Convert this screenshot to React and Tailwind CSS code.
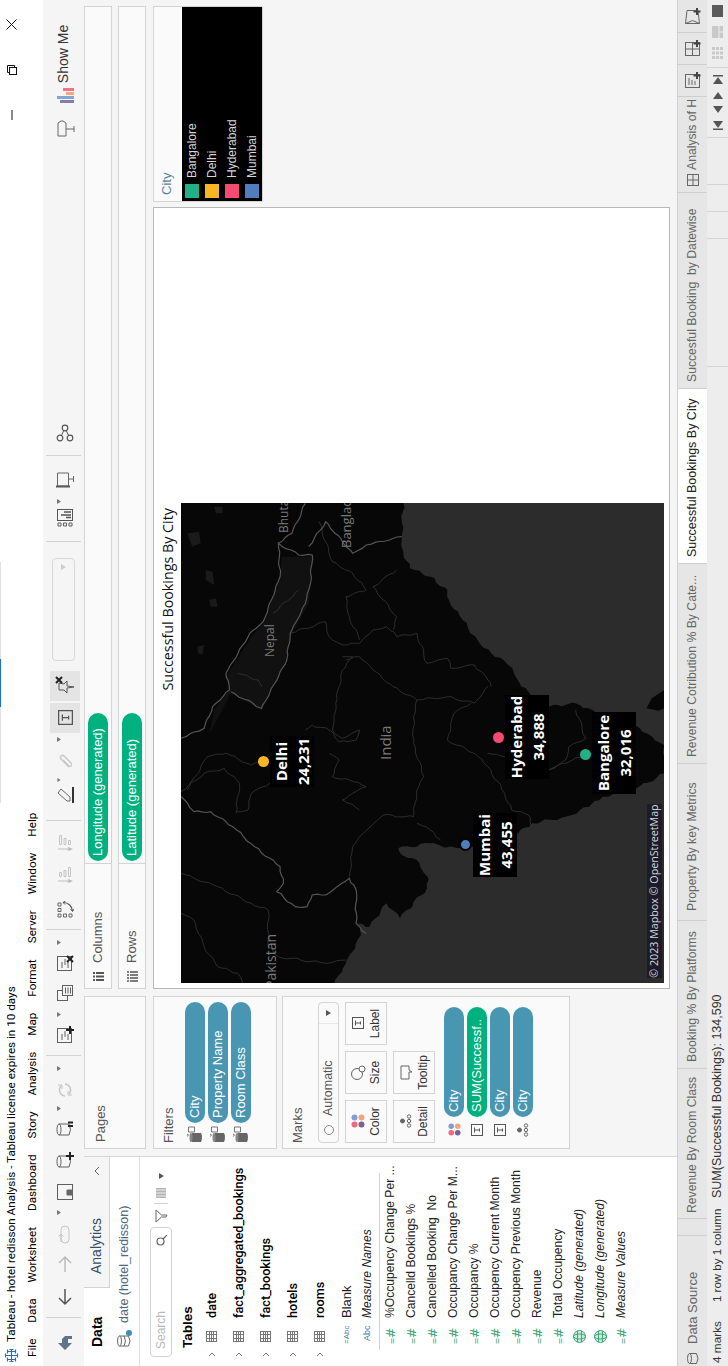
import React from 'react'

// the whole window is turned on its side in the reference, so it is laid out
// upright at 1366x728 and rotated once at the root
const gray = '#5f5f5f'

const Svg = ({ w = 20, h = 20, children, className = '' }) => (
  <svg width={w} height={h} viewBox={`0 0 ${w} ${h}`} fill="none" stroke={gray} strokeWidth="1" className={className}>
    {children}
  </svg>
)

const Drop = ({ className = 'w-[10px]' }) => (
  <div className={`flex justify-center items-center shrink-0 ${className}`}>
    <svg width="5" height="4" viewBox="0 0 5 4" className="mt-[-12px]"><path d="M0 0h5L2.5 4z" fill="#777" /></svg>
  </div>
)

const Sep = ({ className = '' }) => <div className={`w-px h-[35px] mt-[-3px] bg-[#d2d2d2] shrink-0 ${className}`} />

const Slot = ({ className, children }) => (
  <div className={`flex justify-center items-center shrink-0 h-[30px] ${className}`}>{children}</div>
)

const Plus = ({ x, y, c = '#222' }) => <path d={`M${x - 4} ${y}h8M${x} ${y - 4}v8`} stroke={c} strokeWidth="2" />
const Cross = ({ x, y }) => <path d={`M${x - 3} ${y - 3}l6 6M${x + 3} ${y - 3}l-6 6`} stroke="#222" strokeWidth="2" />

const Cyl = ({ x = 3, y = 2, w = 11, h = 14, c = gray }) => (
  <g stroke={c}>
    <ellipse cx={x + w / 2} cy={y + 2} rx={w / 2} ry="2" />
    <path d={`M${x} ${y + 2}v${h - 3}q${w / 2} 3 ${w} 0v-${h - 3}`} />
  </g>
)

const TBox = ({ s = 12 }) => (
  <svg width={s} height={s} viewBox="0 0 12 12" fill="none" stroke="#555">
    <rect x="0.5" y="0.5" width="11" height="11" />
    <path d="M3.5 3.5h5M6 3.5v5M4.5 8.5h3" />
  </svg>
)

const Dots = ({ s = 14 }) => (
  <svg width={s} height={s} viewBox="0 0 14 14">
    <circle cx="3.5" cy="3.5" r="3" fill="#f4677f" />
    <circle cx="10.5" cy="3.5" r="3" fill="#7f9fd0" />
    <circle cx="3.5" cy="10.5" r="3" fill="#7d5f94" />
    <circle cx="10.5" cy="10.5" r="3" fill="#f4a27a" />
  </svg>
)

const DetailDots = () => (
  <svg width="14" height="14" viewBox="0 0 14 14" fill="none" stroke="#666">
    <circle cx="7" cy="3.5" r="2" fill="#666" />
    <circle cx="2.5" cy="10" r="1.7" />
    <circle cx="7" cy="10" r="1.7" />
    <circle cx="11.5" cy="10" r="1.7" />
  </svg>
)

const SortGlyph = ({ bars }) => (
  <Svg w={16} h={16}>
    <path d="M2 1v13M.5 11L2 14.500 3.500 11" stroke="#bdbdbd" strokeWidth="1.200" />
    <path d={bars} stroke="#c4c4c4" />
  </Svg>
)

function Toolbar() {
  return (
    <div className="h-[41px] flex items-center pt-[3px] shrink-0">
      <Slot className="w-[48px]">
        <svg width="16" height="16" viewBox="0 0 16 16"><path d="M0 8l7-7v4h4l3 3v7h-3v-4H7v4z" fill="#5f7389" /></svg>
      </Slot>
      <Sep />
      <Slot className="w-[40px]">
        <Svg w={18} h={14}><path d="M17 7H2M8 1L2 7l6 6" stroke="#555" strokeWidth="1.500" /></Svg>
      </Slot>
      <Slot className="w-[26px]">
        <Svg w={18} h={14}><path d="M1 7h15M10 1l6 6-6 6" stroke="#bbb" strokeWidth="1.500" /></Svg>
      </Slot>
      <Slot className="w-[32px]">
        <Svg w={20} h={14}><rect x="2" y="3" width="17" height="8" rx="4" stroke="#c4c4c4" /><path d="M3 3h8M8.500 .5L11 3 8.500 5.500" stroke="#c4c4c4" /></Svg>
      </Slot>
      <Drop className="w-[12px]" />
      <Slot className="w-[30px]">
        <Svg w={16} h={16}><rect x="0.500" y="0.500" width="15" height="15" /><path d="M5 10h5v5.500H5z" fill="#666" stroke="#666" /></Svg>
      </Slot>
      <Slot className="w-[34px]">
        <Svg w={18} h={18}><Cyl x={2} y={1} w={11} h={13} /><Plus x={13} y={14} /></Svg>
      </Slot>
      <Slot className="w-[30px]">
        <Svg w={18} h={18}><Cyl x={2} y={1} w={11} h={13} /><path d="M11 12v5M14.500 12v5" stroke="#222" strokeWidth="2" /></Svg>
      </Slot>
      <Drop className="w-[8px]" />
      <Slot className="w-[30px]">
        <Svg w={16} h={16}><path d="M2 8a6 6 0 0 1 10-4M14 8a6 6 0 0 1-10 4" stroke="#c4c4c4" strokeWidth="1.400" /><path d="M13 1v4H9M3 15v-4h4" stroke="#c4c4c4" /></Svg>
      </Slot>
      <Drop className="w-[12px]" />
      <Sep className="ml-[7px]" />
      <Slot className="w-[30px] ml-[5px]">
        <Svg w={18} h={18}><rect x="1.500" y="1.500" width="14" height="14" /><path d="M4 6h6M7 9h6M4 12h6" /><Plus x={14} y={14} /></Svg>
      </Slot>
      <Drop className="w-[10px]" />
      <Slot className="w-[34px]">
        <Svg w={18} h={18}><rect x="1.500" y="1.500" width="10" height="10" /><rect x="6.500" y="6.500" width="10" height="10" fill="#f5f5f5" /><path d="M8.500 9.500h6M8.500 12h6M8.500 14.500h6" /></Svg>
      </Slot>
      <Slot className="w-[26px]">
        <Svg w={18} h={18}><rect x="1.500" y="1.500" width="14" height="14" /><path d="M4 6h6M7 9h6M4 12h6" /><Cross x={13} y={14} /></Svg>
      </Slot>
      <Drop className="w-[14px]" />
      <Sep className="ml-[6px]" />
      <Slot className="w-[38px]">
        <Svg w={17} h={17}>
          <path d="M1 1h3v3H1zM1 6.500h3v3H1zM1 12h3v3H1zM6.500 1h3v3h-3zM12 1h3v3h-3z" stroke="#666" />
          <path d="M15.500 6.500A9 9 0 0 1 7 15.500" stroke="#555" strokeWidth="1.200" />
          <path d="M13.500 8l2-2 1.500 2.500M9 13.500L6.500 15.500 9 17" stroke="#555" />
        </Svg>
      </Slot>
      <Slot className="w-[32px]">
        <SortGlyph bars="M6.500 2.500h4v2h-4zM6.500 7h6v2h-6zM6.500 11.500h9v2h-9z" />
      </Slot>
      <Slot className="w-[32px]">
        <SortGlyph bars="M6.500 2.500h9v2h-9zM6.500 7h6v2h-6zM6.500 11.500h4v2h-4z" />
      </Slot>
      <Sep className="ml-[6px]" />
      <Slot className="w-[26px] ml-[12px]">
        <Svg w={16} h={18}><path d="M2 11L10 2l4 3-8 9H2z" stroke="#666" /><path d="M0 17h16" stroke="#333" strokeWidth="2" /></Svg>
      </Slot>
      <Drop className="w-[4px]" />
      <Slot className="w-[34px]">
        <Svg w={16} h={14}><path d="M2 11L10 3a2 2 0 0 1 3 3L6 13a1.500 1.500 0 0 1-3-2l6-6" stroke="#c8c8c8" strokeWidth="1.500" /></Svg>
      </Slot>
      <Drop className="w-[8px]" />
      <Slot className="w-[30px] ml-[3px] bg-[#e4e4e4]"><TBox s={15} /></Slot>
      <Slot className="w-[30px] ml-[2px] bg-[#e4e4e4]">
        <Svg w={20} h={20}><path d="M6 4h7l-1 5 3 3H10l-1 7-1-7H3l3-3z" stroke="#555" /><Cross x={16} y={4} /></Svg>
      </Slot>
      <div className="w-[103px] h-[23px] ml-[10px] mt-[-3px] border border-[#d8d8d8] rounded-sm flex items-center justify-end pr-[5px] shrink-0">
        <svg width="6" height="5" viewBox="0 0 6 5"><path d="M0 0h6L3 5z" fill="#ccc" /></svg>
      </div>
      <Sep className="ml-[16px]" />
      <Slot className="w-[20px] ml-[13px]">
        <Svg w={18} h={16}><path d="M1 1h3v3H1zM1 6.500h3v3H1zM1 12h3v3H1z" /><rect x="6.500" y=".5" width="11" height="15" stroke="#555" /><path d="M9.500 9v5M12 4v10M15 7v7" stroke="#555" strokeWidth="1.500" /></Svg>
      </Slot>
      <Drop className="w-[12px]" />
      <Slot className="w-[30px] ml-px">
        <Svg w={18} h={18}><path d="M2.500 0v14" stroke="#555" strokeWidth="2" /><path d="M3 1.500h13v11H3z" stroke="#666" /><path d="M10 13v4M7 17.500h6" stroke="#666" /></Svg>
      </Slot>
      <Sep className="ml-[9px]" />
      <Slot className="w-[44px]">
        <Svg w={18} h={18}><circle cx="4" cy="4" r="2.800" stroke="#555" strokeWidth="1.200" /><circle cx="4" cy="14" r="2.800" stroke="#555" strokeWidth="1.200" /><circle cx="14" cy="9" r="2.800" stroke="#555" strokeWidth="1.200" /><path d="M6.500 5.500L12 8M6.500 12.500L12 10" stroke="#555" /></Svg>
      </Slot>
      <div className="flex-1" />
      <Slot className="w-[26px]">
        <Svg w={20} h={20}><path d="M3 3h13l2 3v2l-2 3H3z" stroke="#666" /><path d="M10 11v8M7 19h6" stroke="#666" /></Svg>
      </Slot>
      <Slot className="w-[18px] ml-[12px]">
        <svg width="16" height="18" viewBox="0 0 16 18">
          <rect x="0" y="4" width="3" height="14" fill="#8a7aa8" />
          <rect x="4" y="1" width="3" height="17" fill="#7fa6d4" />
          <rect x="8" y="10" width="3" height="8" fill="#f7a67f" />
          <rect x="12" y="7" width="3" height="11" fill="#f4727f" />
        </svg>
      </Slot>
      <div className="w-[60px] ml-[2px] text-[14px] text-[#333] text-center mr-[24px] mt-[-3px] whitespace-nowrap">Show Me</div>
    </div>
  )
}

const TableGlyph = () => (
  <svg width="11" height="11" viewBox="0 0 11 11" fill="none" stroke="#777" className="shrink-0">
    <rect x="0.500" y="0.500" width="10" height="10" />
    <path d="M0 3.500h11M0 5.500h11M0 7.500h11M3.500 0v11M7.500 0v11" />
  </svg>
)

const Globe = () => (
  <svg width="13" height="13" viewBox="0 0 13 13" fill="#cdeadb" stroke="#3fa67a" className="shrink-0">
    <circle cx="6.500" cy="6.500" r="6" />
    <ellipse cx="6.500" cy="6.500" rx="2.500" ry="6" fill="none" />
    <path d="M1 4.500h11M1 8.500h11" />
  </svg>
)

const tables = ['date', 'fact_aggregated_bookings', 'fact_bookings', 'hotels', 'rooms']

const measures = [
  '%Occupency Change Per ...',
  'Cancelld Bookings %',
  'Cancelled Booking  No',
  'Occupancy Change Per M...',
  'Occupancy %',
  'Occupency Current Month',
  'Occupency Previous Month',
  'Revenue',
  'Total Occupency',
]

function Row({ icon, children, className = '' }) {
  return (
    <div className={`flex items-center h-[21px] whitespace-pre text-[12.100px] text-[#222] ${className}`}>
      <div className="w-[23px] ml-[18px] mr-[7px] flex justify-center items-center shrink-0">{icon}</div>
      {children}
    </div>
  )
}

const Hash = () => (
  <span className="text-[#3fa67a] text-[13px] leading-none tracking-[-1px] font-['DejaVu_Sans',sans-serif]"><span className="text-[8px]">=</span>#</span>
)

function DataPane() {
  return (
    <div className="w-[210px] shrink-0 bg-white border-r border-[#d6d6d6] flex flex-col">
      <div className="flex h-[26px] shrink-0">
        <div className="w-[78px] pl-[19px] flex items-center font-bold text-[14px]">Data</div>
        <div className="flex-1 border border-t-0 border-r-0 border-[#d2d2d2] bg-[#f5f5f5] flex items-center pl-[13px] text-[#334e68]">
          <span className="flex-1 text-[14px]">Analytics</span>
          <svg width="10" height="6" viewBox="0 0 10 6" fill="none" stroke="#666" className="mr-[9px]"><path d="M1 5l4-4 4 4" /></svg>
        </div>
      </div>
      <div className="h-[30px] flex items-center pl-[19px] gap-[6px] border-b border-[#dedede] shrink-0">
        <svg width="18" height="17" viewBox="0 0 18 17" fill="none" stroke="#666" className="shrink-0">
          <ellipse cx="6" cy="3.500" rx="5" ry="2" />
          <path d="M1 3.500v9q5 3 10 0v-9M1 8q5 3 10 0" />
          <circle cx="14" cy="13" r="3" fill="#3c8fb5" stroke="none" />
        </svg>
        <span className="text-[12.500px] text-[#4a6a80] whitespace-nowrap">date (hotel_redisson)</span>
      </div>
      <div className="h-[40px] pt-[2px] flex items-center pl-[9px] shrink-0">
        <div className="w-[130px] h-[22px] border border-[#d2d2d2] rounded-sm flex items-center justify-between px-[7px] text-[12px] text-[#b8b8b8]">
          Search
          <svg width="11" height="11" viewBox="0 0 11 11" fill="none" stroke="#666" strokeWidth="1.200"><circle cx="4.500" cy="4.500" r="3.500" /><path d="M7 7l4 4" /></svg>
        </div>
        <svg width="14" height="13" viewBox="0 0 14 13" fill="none" stroke="#666" className="ml-[4px]"><path d="M1 1h12L8 6.500V12L6 11V6.500z" /></svg>
        <div className="w-px h-[14px] bg-[#d2d2d2] mx-[5px]" />
        <svg width="10" height="10" viewBox="0 0 10 10" stroke="#666"><path d="M0 1h10M0 3h10M0 5h10M0 7h10M0 9h10" /><path d="M2 0v10M5 0v10M8 0v10" stroke="#fff" strokeWidth="0.800" /></svg>
        <svg width="6" height="5" viewBox="0 0 6 5" className="ml-[9px]"><path d="M0 0h6L3 5z" fill="#555" /></svg>
      </div>
      <div className="h-[16px] pl-[18px] font-bold text-[13.500px] leading-[16px] mb-[2px] shrink-0">Tables</div>
      <div className="flex flex-col">
        {tables.map((t) => (
          <div key={t} className="flex items-center h-[27px] whitespace-nowrap">
            <svg width="6" height="8" viewBox="0 0 6 8" fill="none" stroke="#777" className="ml-[9px] mr-[9px] shrink-0"><path d="M1 1l3 3-3 3" /></svg>
            <TableGlyph />
            <span className="ml-[13px] font-['Roboto',sans-serif] font-medium text-[12.700px] text-black">{t}</span>
          </div>
        ))}
      </div>
      <div className="flex items-center h-[21px] mt-[3px] whitespace-nowrap text-[13px] text-[#222]">
        <span className="w-[48px] pl-[22px] text-[8px] text-[#3f7fa8] shrink-0">=Abc</span>Blank
      </div>
      <div className="flex items-center h-[21px] whitespace-nowrap text-[12.100px] italic text-[#222]">
        <span className="w-[48px] pl-[25px] text-[9px] not-italic text-[#3f7fa8] shrink-0">Abc</span>Measure Names
      </div>
      <div className="mx-[16px] h-px bg-[#d4d4d4] mt-[1px]" />
      <div>
        {measures.map((m) => (
          <Row key={m} icon={<Hash />}>{m}</Row>
        ))}
        <Row icon={<Globe />} className="italic">Latitude (generated)</Row>
        <Row icon={<Globe />} className="italic">Longitude (generated)</Row>
        <Row icon={<Hash />} className="italic">Measure Values</Row>
      </div>
    </div>
  )
}

const Card = ({ className = '', children }) => (
  <div className={`border border-[#d4d4d4] bg-[#fafafa] ${className}`}>{children}</div>
)

const Pill = ({ green, className = '', children }) => (
  <div className={`h-[20px] rounded-full flex items-center pl-[5px] text-white text-[13px] whitespace-nowrap overflow-hidden ${green ? 'bg-[#00b180]' : 'bg-[#4996b2]'} ${className}`}>
    {children}
  </div>
)

const FilterGlyph = () => (
  <svg width="17" height="16" viewBox="0 0 17 16" fill="none" className="shrink-0">
    <path d="M1 5v9q5 2 9 0V5q-4-2-9 0z" fill="#666" />
    <ellipse cx="5.500" cy="4" rx="4.500" ry="1.500" fill="#888" />
    <path d="M11 1.500h5v6h-5z" stroke="#777" />
    <path d="M6 0h3M9 0L7.500 2" stroke="#777" />
  </svg>
)

const MarkBtn = ({ label, icon }) => (
  <div className="h-[42px] border border-[#d4d4d4] flex flex-col items-center justify-center text-[12px] text-[#333]">
    <div className="h-[18px] flex items-center">{icon}</div>
    <span className="leading-[16px]">{label}</span>
  </div>
)

function Marks() {
  return (
    <Card className="h-[288px] px-[5px] pt-[6px]">
      <div className="text-[13px] text-[#555] h-[29px] leading-[18px]">Marks</div>
      <div className="h-[21px] border border-[#d4d4d4] rounded-sm flex items-center text-[12.500px] text-[#555]">
        <svg width="12" height="12" viewBox="0 0 12 12" fill="none" stroke="#888" className="ml-[6px] mr-[8px]"><circle cx="6" cy="6" r="4.500" /></svg>
        <span className="flex-1">Automatic</span>
        <div className="w-px h-full bg-[#e8e8e8]" />
        <svg width="6" height="5" viewBox="0 0 6 5" className="mx-[7px]"><path d="M0 0h6L3 5z" fill="#555" /></svg>
      </div>
      <div className="grid grid-cols-3 gap-x-[6px] gap-y-[6px] mt-[6px]">
        <MarkBtn label="Color" icon={<Dots />} />
        <MarkBtn label="Size" icon={<svg width="15" height="15" viewBox="0 0 15 15" fill="#fafafa" stroke="#666"><circle cx="6" cy="6" r="5.500" /><circle cx="11" cy="11" r="3" /></svg>} />
        <MarkBtn label="Label" icon={<TBox />} />
        <MarkBtn label="Detail" icon={<DetailDots />} />
        <MarkBtn label="Tooltip" icon={<svg width="15" height="13" viewBox="0 0 15 13" fill="none" stroke="#666"><path d="M1 1h13v8h-4l-2 3v-3H1z" /></svg>} />
      </div>
      <div className="flex flex-col gap-[3px] mt-[9px]">
        {[
          { icon: <Dots s={13} />, label: 'City', id: 1 },
          { icon: <TBox />, label: 'SUM(Successf..', green: true, id: 2 },
          { icon: <TBox />, label: 'City', id: 3 },
          { icon: <DetailDots />, label: 'City', id: 4 },
        ].map((p) => (
          <div key={p.id} className="flex items-center">
            <div className="w-[26px] flex justify-center shrink-0">{p.icon}</div>
            <Pill green={p.green} className="w-[110px]">{p.label}</Pill>
          </div>
        ))}
      </div>
    </Card>
  )
}

function LeftCards() {
  return (
    <div className="w-[153px] shrink-0 flex flex-col mr-[7px]">
      <Card className="h-[62px] pl-[6px] pt-[6px] text-[13px] text-[#555] shrink-0">Pages</Card>
      <Card className="h-[124px] mt-[7px] px-[5px] pt-[6px] shrink-0">
        <div className="text-[13px] text-[#555] h-[25px] leading-[18px]">Filters</div>
        <div className="flex flex-col gap-[3px]">
          {['City', 'Property Name', 'Room Class'].map((f) => (
            <div key={f} className="flex items-center">
              <FilterGlyph />
              <Pill className="w-[122px] ml-[3px]">{f}</Pill>
            </div>
          ))}
        </div>
      </Card>
      <div className="mt-[5px]"><Marks /></div>
    </div>
  )
}

const Shelf = ({ glyph, label, pill, className = '' }) => (
  <Card className={`h-[28px] flex items-center shrink-0 ${className}`}>
    <div className="w-[125px] h-full border-r border-[#d4d4d4] flex items-center pl-[6px] gap-[8px] text-[13px] text-[#555] shrink-0">
      {glyph}
      {label}
    </div>
    <Pill green className="w-[148px] ml-[2px]">{pill}</Pill>
  </Card>
)

// the traced map uses crop coordinates of the map picture; rough() breaks the
// straight runs up a little so coast and borders don't look like a polygon
const rough = (pts, amp) => {
  const out = []
  pts.forEach((p, i) => {
    out.push(p)
    const q = pts[i + 1]
    if (!q) return
    const n = Math.max(1, Math.round(Math.hypot(q[0] - p[0], q[1] - p[1]) / 14))
    for (let k = 1; k < n; k++) {
      const t = k / n
      const seed = i * 7.3 + k * 2.1
      out.push([
        p[0] + (q[0] - p[0]) * t + Math.sin(seed * 3.7) * amp,
        p[1] + (q[1] - p[1]) * t + Math.cos(seed * 2.3) * amp,
      ])
    }
  })
  return out
}

const toPath = (pts, close) =>
  pts.map(([zx, zy], i) => `${i ? 'L' : 'M'}${(493 - zy / 3).toFixed(1)} ${(zx / 2.96 - 31).toFixed(1)}`).join('') + (close ? 'Z' : '')

const landEdge = [
  [750, 38], [745, 140], [750, 190], [770, 235], [830, 260], [880, 300], [890, 345], [925, 390], [970, 450],
  [1010, 490], [1060, 525], [1085, 565], [1120, 605], [1180, 650], [1260, 640], [1310, 660], [1420, 700], [1470, 730], [1522, 765],
  [1522, 850], [1440, 895], [1340, 920], [1300, 950], [1230, 980], [1130, 1000], [1090, 1030], [1000, 1070], [880, 1072], [830, 1060],
  [735, 1075], [745, 1095], [790, 1110], [825, 1170], [820, 1195], [740, 1285], [700, 1240], [650, 1310], [615, 1300], [625, 1335],
  [580, 1420], [545, 1480],
]
const landPts = [[90, 38], ...rough(landEdge, 4), [90, 1480]]

const lankaPts = [[1522, 600], [1485, 625], [1470, 655], [1505, 662], [1522, 655]]

const himalPts = [
  [175, 735], [240, 610], [330, 660], [400, 520], [415, 440], [470, 340], [480, 200], [390, 200], [385, 265], [335, 400],
  [300, 440], [225, 560], [235, 600], [190, 660],
]

const lakes = [
  [[110, 130], [145, 125], [150, 160], [125, 170]],
  [[175, 330], [195, 325], [200, 350], [180, 350]],
  [[140, 470], [160, 465], [155, 495], [142, 490]],
  [[165, 240], [185, 245], [190, 285], [165, 270]],
  [[190, 50], [215, 50], [215, 70], [195, 70]],
]

const borders = [
  [[92, 745], [160, 715], [185, 650], [235, 600], [225, 550], [295, 430], [335, 395], [385, 260], [380, 160], [440, 195], [480, 195], [475, 280], [460, 340], [415, 430], [405, 510], [330, 655], [240, 605]],
  [[92, 920], [130, 965], [180, 965], [245, 1010], [310, 1070], [385, 1130], [395, 1180], [375, 1205], [430, 1250], [465, 1250], [480, 1215], [520, 1215], [590, 1165], [610, 1200], [610, 1300], [640, 1330]],
  [[380, 160], [420, 130], [460, 40]],
  [[470, 170], [520, 95], [600, 190], [640, 165], [745, 140]],
]

const states = [
  [[92, 905], [160, 850], [220, 835], [265, 880], [255, 970]],
  [[225, 790], [300, 825], [350, 810]],
  [[355, 880], [300, 910], [290, 960], [255, 965]],
  [[415, 430], [520, 395], [530, 440], [570, 465], [620, 460], [660, 420], [700, 410], [730, 440], [790, 430], [820, 520], [880, 505], [890, 535], [960, 525], [1000, 570], [1010, 590]],
  [[570, 500], [600, 500], [570, 540], [550, 640], [545, 690], [540, 720], [570, 745], [620, 720], [610, 750], [560, 755], [530, 720], [480, 705], [460, 720]],
  [[660, 540], [720, 590], [790, 630], [780, 680], [780, 760], [810, 860], [790, 900], [780, 980], [755, 980], [690, 975], [620, 1040], [600, 1070], [590, 1160]],
  [[790, 630], [880, 620], [960, 640], [1000, 590]],
  [[950, 640], [900, 670], [880, 750], [960, 790], [1000, 830], [1050, 910], [1070, 960], [1120, 975], [1130, 1010]],
  [[1000, 790], [1050, 800], [1180, 840], [1230, 810], [1240, 770], [1290, 745], [1260, 660]],
  [[1180, 840], [1250, 810], [1310, 790], [1400, 820]],
  [[225, 790], [170, 800], [110, 900]],
  [[530, 790], [560, 810], [540, 860], [590, 870], [640, 890], [600, 910], [570, 930], [620, 960]],
  [[92, 1150], [200, 1190], [300, 1240], [350, 1260], [350, 1370], [380, 1400], [520, 1420], [580, 1410]],
  [[92, 1270], [130, 1290], [160, 1370], [200, 1430], [260, 1450], [275, 1480]],
  [[500, 95], [540, 215], [600, 250], [640, 300], [580, 320], [590, 380], [620, 450]],
  [[730, 240], [660, 290], [730, 380], [720, 420]],
  [[660, 540], [620, 500], [580, 510]],
  [[790, 1000], [830, 1020], [860, 1050]],
  [[260, 550], [320, 570], [330, 590]],
  [[365, 370], [440, 300]],
]

const labels = [
  { text: ['Delhi', '24,231'], cls: 'left-[196px] top-[89px] w-[51px] h-[44px]' },
  { text: ['Hyderabad', '34,888'], cls: 'left-[204px] top-[324px] w-[84px] h-[44px]' },
  { text: ['Bangalore', '32,016'], cls: 'left-[189px] top-[411px] w-[82px] h-[44px]' },
  { text: ['Mumbai', '43,455'], cls: 'left-[106px] top-[292px] w-[64px] h-[44px]' },
]

function MapView() {
  return (
    <div className="relative w-[480px] h-[483px] shrink-0 bg-[#2c2c2c] overflow-hidden font-['Open_Sans',sans-serif]">
      <svg width="480" height="483" viewBox="0 0 480 483" fill="none" className="absolute left-0 top-0">
        <path d={toPath(landPts, true)} fill="#070707" />
        <path d={toPath(lankaPts, true)} fill="#070707" />
        <path d={toPath(himalPts, true)} fill="#111111" />
        {lakes.map((l, i) => <path key={i} d={toPath(l, true)} fill="#1a1a1a" />)}
        {states.map((l, i) => <path key={i} d={toPath(rough(l, 3))} stroke="#363636" strokeWidth="0.800" />)}
        {borders.map((l, i) => <path key={i} d={toPath(rough(l, 2.500))} stroke="#555555" strokeWidth="1.200" />)}
      </svg>
      <span className="absolute left-[326px] top-[80px] text-[12px] text-[#7a7a7a]">Nepal</span>
      <span className="absolute left-[223px] top-[193px] text-[15px] text-[#7a7a7a]">India</span>
      <span className="absolute left-[450px] top-[94px] text-[12px] text-[#7a7a7a]">Bhutan</span>
      <span className="absolute left-[435px] top-[156px] text-[13px] text-[#7a7a7a]">Bangladesh</span>
      <span className="absolute left-[-6px] top-[79px] text-[14px] text-[#7a7a7a]">Pakistan</span>

      <span className="absolute left-[216px] top-[77px] w-[11px] h-[11px] rounded-full bg-[#fab522]" />
      <span className="absolute left-[240px] top-[312px] w-[11px] h-[11px] rounded-full bg-[#f54a72]" />
      <span className="absolute left-[223px] top-[399px] w-[11px] h-[11px] rounded-full bg-[#22b088]" />
      <span className="absolute left-[132px] top-[278px] w-[13px] h-[13px] rounded-full bg-[#4f7ebd] border-2 border-[#050505]" />

      {labels.map((l) => (
        <div key={l.text[0]} className={`absolute bg-black text-white font-bold text-[15px] leading-[22px] text-center whitespace-nowrap ${l.cls}`}>
          {l.text.map((t) => <div key={t}>{t}</div>)}
        </div>
      ))}
      <div className="absolute left-[5px] top-[466px] w-[174px] h-[15px] bg-[#1b1b2a] text-[#d8d8d8] text-[10.700px] font-medium leading-[15px] text-center whitespace-nowrap">© 2023 Mapbox © OpenStreetMap</div>
    </div>
  )
}

function Workspace() {
  return (
    <div className="flex-1 flex pl-[7px] min-w-0">
      <LeftCards />
      <div className="flex-1 flex flex-col min-w-0 pr-[6px]">
        <Shelf
          label="Columns"
          pill="Longitude (generated)"
          glyph={<svg width="11" height="11" viewBox="0 0 11 11" stroke="#555" strokeWidth="2"><path d="M2 0v2M2 3v8M5.500 0v2M5.500 3v8M9 0v2M9 3v8" /></svg>}
        />
        <Shelf
          label="Rows"
          pill="Latitude (generated)"
          className="mt-[6px]"
          glyph={<svg width="11" height="11" viewBox="0 0 11 11" stroke="#555" strokeWidth="1.600"><path d="M1 0v2M1 3v8M4 0v2M4 3v8M7 0v2M7 3v8M10 0v2M10 3v8" /></svg>}
        />
        <div className="flex mt-[7px] gap-[5px]">
          <div className="w-[782px] h-[517px] bg-white border border-[#b8b8b8] pl-[5px] flex flex-col shrink-0">
            <div className="w-[480px] h-[27px] shrink-0 pr-[5px] flex items-center justify-end text-[14.300px] text-[#111] font-['Open_Sans',sans-serif] whitespace-nowrap">Successful Bookings By City</div>
            <MapView />
          </div>
          <div className="w-[196px] h-[110px] border border-[#d4d4d4] shrink-0">
            <div className="h-[28px] bg-[#fafafa] pl-[6px] text-[13px] text-[#5c7f9f] leading-[26px]">City</div>
            <div className="h-[80px] bg-black text-[#d6d6d6] text-[12px] pl-[3px]">
              {[
                ['Bangalore', 'bg-[#22b088]'],
                ['Delhi', 'bg-[#fab522]'],
                ['Hyderabad', 'bg-[#f54a72]'],
                ['Mumbai', 'bg-[#4f7ebd]'],
              ].map(([n, c]) => (
                <div key={n} className="flex items-center h-[20px] gap-[6px]">
                  <span className={`w-[14px] h-[14px] shrink-0 ${c}`} />
                  <span>{n}</span>
                </div>
              ))}
            </div>
          </div>
        </div>
      </div>
    </div>
  )
}

const tabs = [
  { label: 'Revenue By Room Class', w: 'w-[150px] pl-[5px]' },
  { label: 'Booking % By Platforms', w: 'w-[148px] pl-[6px]' },
  { label: 'Property By key Metrics', w: 'w-[157px] pl-[9px]' },
  { label: 'Revenue Cotribution % By Cate...', w: 'w-[200px] pl-[6px]' },
  { label: 'Successful Bookings By City', w: 'w-[175px] pl-[6px]', active: true },
  { label: 'Succesful Booking  by Datewise', w: 'w-[196px] pl-[6px]' },
]

const AddGlyph = ({ children }) => (
  <svg width="18" height="18" viewBox="0 0 18 18" fill="none" stroke="#666">
    {children}
    <path d="M10 13h7M13.500 9.500v7" stroke="#444" strokeWidth="2" />
  </svg>
)

function TabStrip() {
  return (
    <div className="h-[30px] flex shrink-0 bg-[#e6e6e6] border-t border-[#d0d0d0] text-[12.200px] text-[#666] whitespace-pre">
      <div className="w-[131px] flex items-center pl-[2px] gap-[9px] border-r border-[#cfcfcf] shrink-0 text-[13px]">
        <svg width="11" height="12" viewBox="0 0 11 12" fill="none" stroke="#666"><ellipse cx="5.500" cy="2.500" rx="5" ry="2" /><path d="M.5 2.500v7q5 3 10 0v-7" /></svg>
        Data Source
      </div>
      <div className="w-[17px] border-r border-[#cfcfcf] shrink-0" />
      {tabs.map((t) => (
        <div key={t.label} className={`${t.w} flex items-center border-r border-[#cfcfcf] shrink-0 overflow-hidden ${t.active ? 'bg-white text-[#222] text-[12.500px]' : ''}`}>
          {t.label}
        </div>
      ))}
      <div className="w-[95px] flex items-center overflow-hidden pl-[6px] gap-[4px] shrink-0">
        <svg width="12" height="12" viewBox="0 0 12 12" fill="none" stroke="#666" className="shrink-0"><rect x=".5" y=".5" width="11" height="11" /><path d="M.5 6h11M6 .5v11" /></svg>
        Analysis of H
      </div>
      {[
        <AddGlyph key="a"><rect x="1.500" y="1.500" width="13" height="14" /><path d="M4 5h7M4 8h5M4 11h4" /></AddGlyph>,
        <AddGlyph key="b"><rect x="1.500" y="1.500" width="13" height="14" /><path d="M1.500 8.500h13M8 1.500v14" /></AddGlyph>,
        <AddGlyph key="c"><path d="M1.500 1.500l13 1.500v11l-13 1.500zM1.500 1.500l3 7-3 7" /></AddGlyph>,
      ].map((ic, i) => (
        <div key={i} className="w-[32px] flex justify-center items-center border-l border-[#cfcfcf] shrink-0">{ic}</div>
      ))}
    </div>
  )
}

function StatusBar() {
  return (
    <div className="h-[21px] flex items-center bg-[#ededed] text-[12.500px] text-[#333] shrink-0 whitespace-nowrap">
      <span className="ml-[3px] w-[61px] text-[11.800px]">4 marks</span>
      <span className="w-[104px] text-[11.500px]">1 row by 1 column</span>
      <span className="w-[831px]">SUM(Successful Bookings): 134,590</span>
      <div className="w-[128px] h-full border-l border-[#d4d4d4]" />
      <div className="w-[27px] h-full border-l border-[#d4d4d4]" />
      <div className="w-[27px] h-full border-l border-[#d4d4d4]" />
      <div className="w-[47px] h-full border-l border-[#d4d4d4]" />
      <div className="w-[70px] h-full border-l border-[#d4d4d4] flex items-center justify-between px-[7px]">
        <svg width="9" height="10" viewBox="0 0 9 10" fill="#555"><path d="M9 0v10L2 5z" /><path d="M0 0h1.500v10H0z" /></svg>
        <svg width="7" height="10" viewBox="0 0 7 10" fill="#555"><path d="M7 0v10L0 5z" /></svg>
        <svg width="7" height="10" viewBox="0 0 7 10" fill="#555"><path d="M0 0v10l7-5z" /></svg>
        <svg width="9" height="10" viewBox="0 0 9 10" fill="#555"><path d="M0 0v10l7-5z" /><path d="M7.500 0H9v10H7.500z" /></svg>
      </div>
      <div className="flex-1 h-full border-l border-[#d4d4d4] flex items-center justify-around pl-[3px]">
        <svg width="12" height="11" viewBox="0 0 12 11" fill="#c9c9c9"><path d="M0 0h3v3H0zM4.500 0h3v3h-3zM9 0h3v3H9zM0 4h3v3H0zM4.500 4h3v3h-3zM9 4h3v3H9zM0 8h3v3H0zM4.500 8h3v3h-3zM9 8h3v3H9z" /></svg>
        <svg width="12" height="11" viewBox="0 0 12 11" fill="#c9c9c9"><path d="M0 0h12v6.500H0zM0 7.500h5.500V11H0zM6.500 7.500H12V11H6.500z" /></svg>
        <span className="w-[12px] h-[11px] bg-[#5a5a5a]" />
      </div>
    </div>
  )
}

export default function App() {
  return (
    <div className="relative w-[728px] h-[1366px] overflow-hidden bg-white">
      <div className="w-[1366px] h-[728px] origin-top-left rotate-[-90deg] translate-y-[1366px] bg-[#f5f5f5] flex flex-col font-['Liberation_Sans',sans-serif] text-black">
        <div className="h-[23px] bg-white flex items-center shrink-0 relative">
          <span className="absolute left-[563px] top-0 w-[241px] h-px bg-[#e0e0e0]" />
          <span className="absolute left-[659px] top-0 w-[48px] h-px bg-[#1f6fd0]" />
          <div className="ml-[3px] w-[15px] h-[15px] shrink-0">
            <svg width="15" height="15" viewBox="0 0 15 15" stroke="#2f6fa8" strokeWidth="1.200">
              <path d="M7.500 1v13M1 7.500h13M3.500 3.500v8M11.500 3.500v8M1.500 3.500h4M1.500 11.500h4M9.500 3.500h4M9.500 11.500h4M5.500 1.500h4M5.500 13.500h4M1.500 5.500v4M13.500 5.500v4" />
            </svg>
          </div>
          <span className="ml-[6px] text-[11.700px] font-['Roboto',sans-serif] whitespace-nowrap">Tableau - hotel redisson Analysis - Tableau license expires in 10 days</span>
          <div className="flex-1" />
          <svg width="10" height="10" viewBox="0 0 10 10" stroke="#111" className="mr-[35px]"><path d="M0 5h10" /></svg>
          <svg width="10" height="10" viewBox="0 0 10 10" fill="none" stroke="#111" className="mr-[35px]"><rect x=".5" y="2.500" width="7" height="7" /><path d="M2.500 2.500v-2h7v7h-2" /></svg>
          <svg width="11" height="11" viewBox="0 0 11 11" stroke="#111" className="mr-[19px]"><path d="M.5 .5l10 10M10.500 .5l-10 10" /></svg>
        </div>
        <div className="h-[20px] bg-white flex items-center shrink-0 pl-[9px] gap-[16px] text-[11.700px] font-['Roboto',sans-serif] whitespace-nowrap">
          {['File', 'Data', 'Worksheet', 'Dashboard', 'Story', 'Analysis', 'Map', 'Format', 'Server', 'Window', 'Help'].map((m) => (
            <span key={m}>{m}</span>
          ))}
        </div>
        <Toolbar />
        <div className="flex-1 flex min-h-0">
          <DataPane />
          <Workspace />
        </div>
        <TabStrip />
        <StatusBar />
      </div>
    </div>
  )
}
